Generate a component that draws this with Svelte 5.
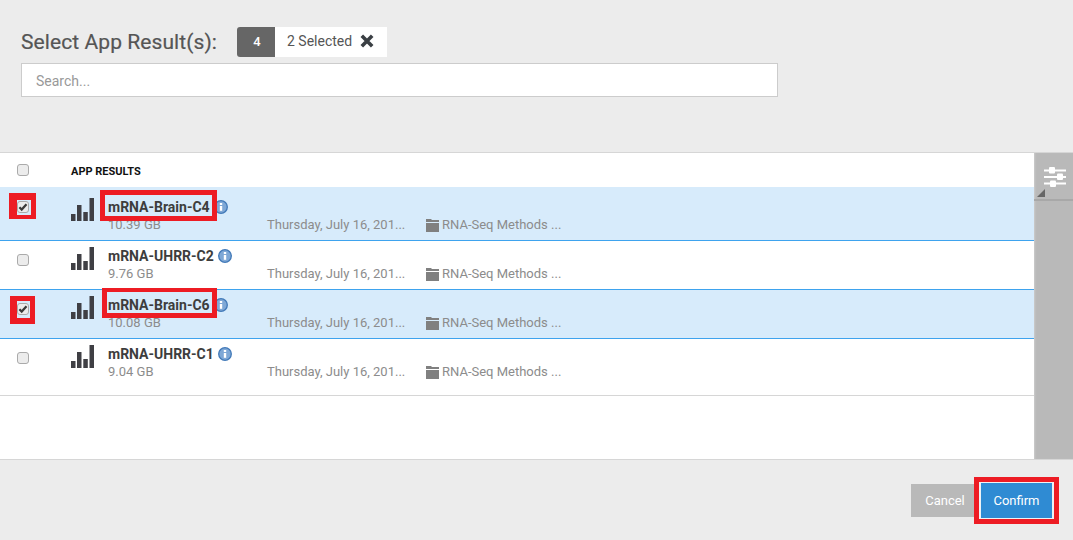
<script>
  const rows = [
    { name: 'mRNA-Brain-C4', size: '10.39 GB', selected: true },
    { name: 'mRNA-UHRR-C2', size: '9.76 GB', selected: false },
    { name: 'mRNA-Brain-C6', size: '10.08 GB', selected: true },
    { name: 'mRNA-UHRR-C1', size: '9.04 GB', selected: false }
  ];
</script>

<div class="page">
  <header class="head">
    <div class="title-row">
      <h1>Select App Result(s):</h1>
      <div class="badge">
        <span class="count">4</span>
        <span class="sel">2 Selected
          <svg class="x" viewBox="0 0 14 14" width="14" height="14"><path d="M1.8 1.8l10.4 10.4M12.2 1.8L1.8 12.2" stroke="#3a3f44" stroke-width="3.6" fill="none"/></svg>
        </span>
      </div>
    </div>
    <input class="search" placeholder="Search..." />
  </header>

  <section class="panel">
    <div class="list">
      <div class="list-head">
        <span class="cb"></span>
        <span class="col">APP RESULTS</span>
      </div>
      {#each rows as r, i}
        <div class="row" class:selected={r.selected} class:first={i === 0} class:last={i === 3}>
          <div class="cbcell">
            <span class="cb">
              {#if r.selected}
                <svg viewBox="0 0 10 10" width="10" height="10"><path d="M1.4 5.2l2.3 2.4 4.8-5.4" stroke="#3a3a3a" stroke-width="2.2" fill="none"/></svg>
              {/if}
            </span>
          </div>
          <svg class="bars" viewBox="0 0 23 23" width="23" height="23">
            <rect x="0" y="16" width="4.5" height="7" />
            <rect x="6" y="7" width="4.5" height="16" />
            <rect x="12.3" y="14" width="4.5" height="9" />
            <rect x="18.5" y="0" width="4.5" height="23" />
          </svg>
          <div class="info">
            <div class="name-line">
              <span class="name">{r.name}</span>
              <svg class="i" viewBox="0 0 14 14" width="14" height="14">
                <circle cx="7" cy="7" r="6.3" fill="#7fa8d6" stroke="#4179b8" stroke-width="1.3" />
                <rect x="5.8" y="6" width="2.4" height="4.8" fill="#fff" />
                <rect x="5.8" y="3" width="2.4" height="2" fill="#fff" />
              </svg>
            </div>
            <div class="size">{r.size}</div>
          </div>
          <div class="date">Thursday, July 16, 201...</div>
          <div class="folder">
            <svg viewBox="0 0 13 13" width="13" height="13"><path d="M0 0h5l1 1h7v2H0zM0 4h13v9H0z" fill="#808080"/></svg>
            <span>RNA-Seq Methods ...</span>
          </div>
        </div>
      {/each}
    </div>
    <aside class="side">
      <div class="side-top">
        <svg viewBox="0 0 22 20" width="22" height="20">
          <g fill="#fff">
            <rect x="0" y="2.5" width="22" height="2" />
            <rect x="5" y="0" width="6" height="6.5" rx="1" />
            <rect x="0" y="9" width="22" height="2" />
            <rect x="13" y="6.5" width="6" height="6.5" rx="1" />
            <rect x="0" y="15.5" width="22" height="2" />
            <rect x="6" y="13.5" width="6" height="6.5" rx="1" />
          </g>
        </svg>
        <span class="tri"></span>
      </div>
    </aside>
  </section>

  <footer class="foot">
    <button class="cancel">Cancel</button>
    <button class="confirm">Confirm</button>
  </footer>

  <span class="mark cb1"></span>
  <span class="mark cb3"></span>
  <span class="mark name1"></span>
  <span class="mark name3"></span>
  <span class="mark conf"></span>
</div>

<style>
  :global(body) { margin: 0; }
  .page {
    width: 1073px;
    height: 540px;
    background: #ececec;
    font-family: Roboto, "Liberation Sans", sans-serif;
    display: flex;
    flex-direction: column;
    overflow: hidden;
    position: relative;
  }
  .head { height: 152px; padding: 27px 0 0 21px; box-sizing: border-box; flex: none; }
  .title-row { display: flex; align-items: center; height: 30px; }
  h1 { margin: 0; font-size: 21px; font-weight: 400; color: #555; width: 216px; letter-spacing: 0.08px; -webkit-text-stroke: 0.2px #555; }
  .badge { display: flex; height: 30px; font-size: 14px; }
  .count {
    width: 38px; background: #666; color: #fff; display: flex; align-items: center; justify-content: center;
    border-radius: 3px 0 0 3px; font-weight: 500; font-size: 13px; box-sizing: border-box; padding: 0 0 2px 2px;
  }
  .sel {
    width: 112px; background: #fff; color: #555; display: flex; align-items: center; padding: 0 0 2px 12px; box-sizing: border-box; gap: 8px;
  }
  .search {
    display: block; margin-top: 6px; width: 757px; height: 34px; box-sizing: border-box;
    border: 1px solid #ccc; background: #fff; padding: 2px 14px 0; font: 14px Roboto, sans-serif; outline: none;
  }
  .search::placeholder { color: #999; opacity: 1; }

  .panel {
    height: 306px; flex: none; display: flex; background: #fff;
    border-top: 1px solid #d6d6d6; border-bottom: 1px solid #d6d6d6;
  }
  .list { flex: 1; min-width: 0; }
  .list-head { height: 34px; display: flex; align-items: center; padding-left: 17px; }
  .col { margin-left: 42px; font-size: 11px; font-weight: 700; color: #111; padding-top: 2px; }
  .cb {
    width: 10px; height: 10px; flex: none; border: 1px solid #aaa; border-radius: 3px; background: #ececec;
    display: flex; align-items: center; justify-content: center;
  }
  .cb svg { display: block; flex: none; }
  .row {
    height: 49px; box-sizing: border-box; border-bottom: 1px solid #3ea3ee; display: flex;
    padding-left: 17px; align-items: flex-start;
  }
  .row.first { height: 54px; }
  .row.last { height: 57px; border-bottom-color: #d6d6d6; }
  .row.selected { background: #d7ebfb; }
  .cbcell { width: 42px; padding-top: 13px; flex: none; }
  .row.first .cbcell { padding-top: 14px; }
  .bars { margin: 6px 0 0 12px; fill: #3f3f44; flex: none; }
  .row.first .bars { margin-top: 11px; }
  .info { margin-left: 14px; width: 159px; flex: none; padding-top: 6px; }
  .row.first .info { padding-top: 11px; }
  .name-line { display: flex; align-items: center; gap: 4px; height: 18px; }
  .name { font-size: 14px; font-weight: 700; color: #3d3d3d; }
  .size { font-size: 13px; color: #8c8c8c; margin-top: 1px; line-height: 16px; }
  .date { font-size: 13px; color: #8c8c8c; margin-top: 25px; line-height: 16px; width: 159px; flex: none; }
  .row.first .date { margin-top: 30px; }
  .folder { display: flex; align-items: center; gap: 3px; font-size: 13px; color: #8c8c8c; margin-top: 25px; line-height: 16px; }
  .row.first .folder { margin-top: 30px; }

  .side { width: 39px; background: #b9b9b9; flex: none; box-shadow: inset 2px 0 2px -1px #ccc; }
  .side-top { height: 48px; border-bottom: 2px solid #a8a8a8; position: relative; display: flex; justify-content: center; padding: 14px 0 0 3px; box-sizing: border-box; }
  .side-top svg { display: block; }
  .tri { position: absolute; left: 3px; bottom: 2px; width: 0; height: 0; border-left: 8px solid transparent; border-bottom: 8px solid #666; }

  .foot { flex: 1; display: flex; justify-content: flex-end; align-items: flex-start; padding: 24px 19px 0 0; }
  button { font: 13px Roboto, sans-serif; color: #fff; padding: 0; border: none; }
  .cancel { background: #b9b9b9; width: 68px; height: 33px; }
  .confirm {
    background: #2f8bd3; width: 75px; height: 37px; margin-top: -2px; box-sizing: border-box;
    border: solid #eef2f5; border-width: 1px 2px;
  }

  .mark { position: absolute; box-sizing: border-box; border: 5px solid #ed1c24; }
  .cb1 { left: 9px; top: 193px; width: 27px; height: 26px; border-width: 7px 5px 4px 8px; }
  .cb3 { left: 10px; top: 296px; width: 25px; height: 28px; border-width: 5px 5px 6px 7px; }
  .name1 { left: 100px; top: 190px; width: 117px; height: 31px; }
  .name3 { left: 102px; top: 288px; width: 115px; height: 30px; border-top-width: 4px; }
  .conf { left: 974px; top: 477px; width: 85px; height: 47px; }
</style>
